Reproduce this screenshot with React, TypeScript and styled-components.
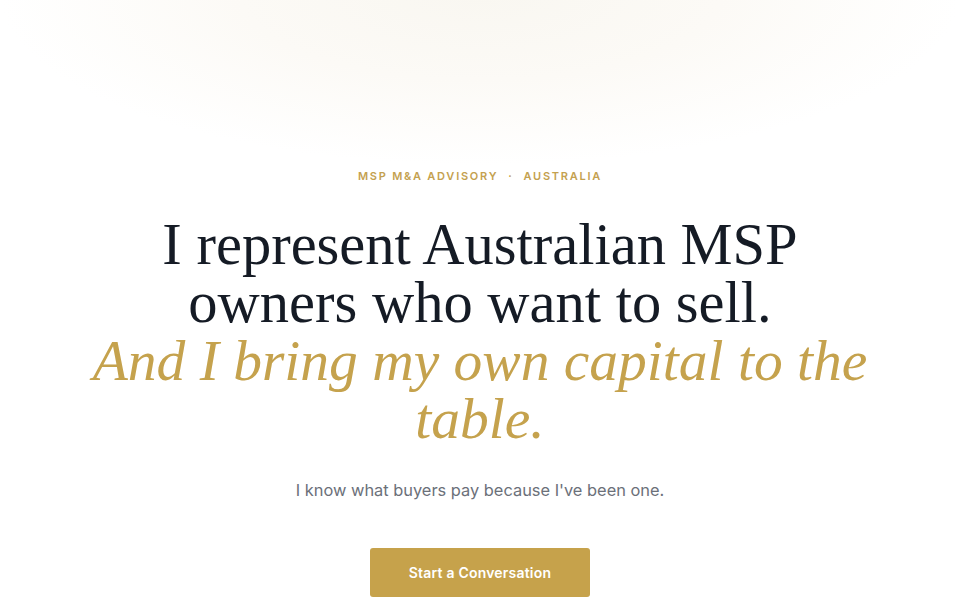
import React from "react";
import styled, { createGlobalStyle } from "styled-components";

const GlobalStyle = createGlobalStyle`
  html, body {
    margin: 0;
    padding: 0;
    background: #ffffff;
  }
  * {
    box-sizing: border-box;
  }
`;

const Hero = styled.section`
  position: relative;
  width: 100%;
  height: 600px;
  overflow: hidden;
  display: flex;
  flex-direction: column;
  align-items: center;
  padding-top: 169px;
  background:
    radial-gradient(ellipse 480px 170px at 50% -5px, #f9f7f1 0%, #fcfaf6 50%, rgba(255, 255, 255, 0) 100%),
    #ffffff;
`;

const Eyebrow = styled.div`
  font-family: "Inter", "Liberation Sans", sans-serif;
  font-size: 11px;
  font-weight: 600;
  letter-spacing: 1.75px;
  color: #c4a14f;
  text-transform: uppercase;
  display: flex;
  gap: 10px;
  line-height: 14px;
`;

const Heading = styled.h1`
  margin: 33px 0 0;
  max-width: 800px;
  text-align: center;
  font-family: "Liberation Serif", "DejaVu Serif", serif;
  font-weight: 400;
  font-size: 58.5px;
  line-height: 58px;
  color: #151b25;
`;

const Accent = styled.em`
  display: block;
  font-style: italic;
  font-size: 57.5px;
  color: #c5a24d;
`;

const Lead = styled.p`
  margin: 30px 0 0;
  font-family: "Inter", "Liberation Sans", sans-serif;
  font-size: 16.4px;
  color: #6b7079;
  line-height: 24px;
`;

const Cta = styled.button`
  margin-top: 46px;
  width: 220px;
  height: 49px;
  border: none;
  border-radius: 3px;
  background: #c6a24b;
  color: #ffffff;
  font-family: "Inter", "Liberation Sans", sans-serif;
  font-size: 14px;
  font-weight: 600;
  letter-spacing: 0.2px;
  cursor: pointer;
`;

const App = () => {
  return (
    <>
      <GlobalStyle />
      <Hero>
        <Eyebrow>
          <span>MSP M&amp;A Advisory</span>
          <span>·</span>
          <span>Australia</span>
        </Eyebrow>
        <Heading>
          I represent Australian MSP owners who want to sell.
          <Accent>And I bring my own capital to the table.</Accent>
        </Heading>
        <Lead>I know what buyers pay because I've been one.</Lead>
        <Cta>Start a Conversation</Cta>
      </Hero>
    </>
  );
};

export default App;
